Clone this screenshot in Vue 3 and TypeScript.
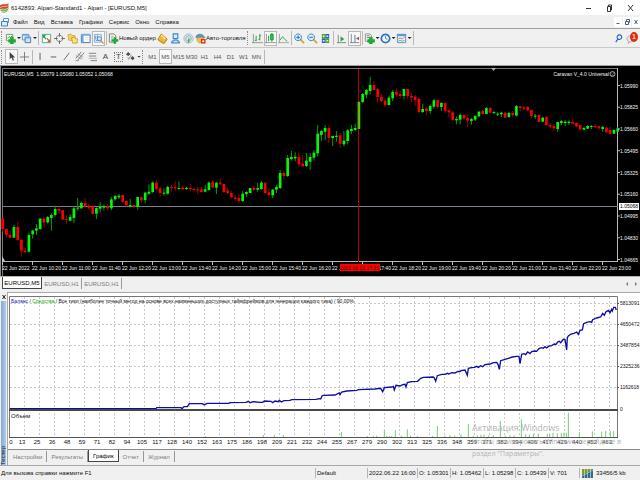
<script setup lang="ts">
import { ref } from 'vue'

type Shape = { d: string; f?: string; s?: string; w?: number }
type Tool = { icon: string; name: string; drop?: boolean; text?: string; on?: boolean }

const icons: Record<string, Shape[]> = {
  newChart: [
    { d: 'M1.500 1.500h7v7h-7z', f: '#eef5ee', s: '#6f9a7c' },
    { d: 'M2.500 6l2-2 1.500 1 2-2', s: '#3f9e53' },
    { d: 'M6 4.500h3v2.500h2.500v3H9v2H6v-2H4v-3h2z', f: '#18b22c', s: '#0c8a1c', w: 0.5 },
  ],
  profiles: [
    { d: 'M1.500 1.500h7v6h-7z', f: '#e9f2fb', s: '#5b8fc4' },
    { d: 'M4.500 4.500h6v6h-6z', f: '#cfe3f7', s: '#3f78b5' },
    { d: 'M4 5.500h7M1 2.500h8', s: '#6da2d8' },
  ],
  market: [
    { d: 'M1.500 1.500h9v9h-9z', f: '#f4fbf6', s: '#4fa6a0' },
    { d: 'M2 2h3v1L4 4l2 2-1 1-2-2-1 1z', f: '#1eaa3c' },
    { d: 'M10 10H6.500L8 8.500 6 6.500l1-1 2 2 1-1z', f: '#e2542c' },
  ],
  navigator: [
    { d: 'M6 2.500a3.500 3.500 0 1 0 .01 0z', s: '#777' },
    { d: 'M6 0v4M6 8v4M0 6h4M8 6h4', s: '#666' },
  ],
  folder: [
    { d: 'M1 2l3-1 1.500 1.500L9 3v5H2z', f: '#f5d262', s: '#c59a26', w: 0.7 },
    { d: 'M5 5l2.500-.5L9 6l2.500.5-.5 4.500H6z', f: '#ffe27a', s: '#b88a1a', w: 0.8 },
  ],
  terminal: [
    { d: 'M1.500 1.500h9.500v9h-9.500z', f: '#fff', s: '#2f74b8' },
    { d: 'M1 1h10v2H1zM2 3h2v7H2z', f: '#76aede' },
    { d: 'M5.500 5h4M5.500 7h4', s: '#c9d9e8', w: 0.7 },
  ],
  tester: [
    { d: 'M1.500 1.500h7.500v8.500H1.500z', f: '#f3f8fd', s: '#7fa6cc' },
    { d: 'M3 3v4M5 2.500v3M3 8h3', s: '#4a86c6' },
    { d: 'M7 4a2.200 2.200 0 1 0 .01 0z', f: '#cfe6fa', s: '#3c78b4' },
    { d: 'M8.500 8l3 3.500', s: '#c08a2c', w: 1.300 },
  ],
  order: [
    { d: 'M1.500 1h5l2 2v7h-7z', f: '#fbfbfb', s: '#7a7a7a' },
    { d: 'M3 3.500h3M3 5.500h3', s: '#9a9a9a' },
    { d: 'M6.500 5h2v2h2.500v2H8.500v2.500h-2V9H4V7h2.500z', f: '#1bb52e', s: '#0a8f1c', w: 0.5 },
  ],
  editor: [
    { d: 'M4.500 1L11 6.500 7.500 11 1 7z', f: '#f3b92c', s: '#b5790c', w: 0.8 },
    { d: 'M4.500 2.500L9 6.500', s: '#ffe9a0', w: 1.500 },
    { d: 'M1 7l1 1.500L7.500 12l3.500-5', s: '#c98d18' },
  ],
  vps: [
    { d: 'M3.500 1h5v5h-5z', f: '#d5eafb', s: '#3a84c8', w: 1.200 },
    { d: 'M1.500 11c0-5 9-5 9 0z', f: '#6fb0e6', s: '#2d72b6', w: 0.8 },
    { d: 'M4 9.500h4', s: '#e4f1fc' },
  ],
  signal: [
    { d: 'M6 1a5 5 0 1 0 .01 0z', f: '#dfe9ee', s: '#8fa9b8', w: 0.8 },
    { d: 'M6 3a3 3 0 1 0 .01 0z', s: '#5f9ab4', w: 0.8 },
    { d: 'M6 4.500l1.500 2L6.500 11H5z', f: '#53b35a' },
  ],
  auto: [
    { d: 'M1 4c1-3.500 7-3.500 8.500-.5L11 5H1z', f: '#5b94c8', s: '#2d689f', w: 0.6 },
    { d: 'M2 5h7c0 4-1.500 6-3.500 6S2 9 2 5z', f: '#f2c043', s: '#bb8a1e', w: 0.6 },
    { d: 'M6.500 6.500h5v5h-5z', f: '#e22b1a' },
    { d: 'M8 8h2v2H8z', f: '#fff' },
  ],
  bars: [
    { d: 'M1.500 1v10M0 10.500h12', s: '#8a958d' },
    { d: 'M4.500 3v6M3 8h1.500M8.500 1v7M8.500 3H10M7 7h1.500', s: '#2a9448' },
  ],
  candles: [
    { d: 'M1.500 1v10M0 10.500h12', s: '#8a958d' },
    { d: 'M4 3v6M7.500 0v9.500', s: '#16863a' },
    { d: 'M6 1.500h3v6H6z', f: '#24c348', s: '#0f8e2c', w: 0.8 },
  ],
  line: [
    { d: 'M1.500 1v10M0 10.500h12', s: '#9aa59d' },
    { d: 'M2 8l3-4 2 2.500L10 9', s: '#2c9c4a' },
  ],
  zoomIn: [
    { d: 'M7 7l4 4', s: '#d6a628', w: 2 },
    { d: 'M4.500 1a3.700 3.700 0 1 0 .01 0z', f: '#d7ecfb', s: '#3d80bd' },
    { d: 'M2.500 4.700h4M4.500 2.700v4', s: '#2469a8' },
  ],
  zoomOut: [
    { d: 'M7 7l4 4', s: '#d6a628', w: 2 },
    { d: 'M4.500 1a3.700 3.700 0 1 0 .01 0z', f: '#d7ecfb', s: '#3d80bd' },
    { d: 'M2.500 4.700h4', s: '#2469a8' },
  ],
  tile: [
    { d: 'M2 1h4v5H2zM6 6h4v5H6z', f: '#42a52c' },
    { d: 'M6 1h4v5H6zM2 6h4v5H2z', f: '#2c62ae' },
    { d: 'M3 3.500h2M7 3.500h2M3 8.500h2M7 8.500h2', s: '#e8f3e8', w: 1.500 },
  ],
  scroll: [
    { d: 'M2.500 2v9M1 10.500h10', s: '#7c857e' },
    { d: 'M5 3.500l4 3-4 3z', f: '#2da446' },
  ],
  shift: [
    { d: 'M2.500 1v10M1 10.500h10', s: '#7c857e' },
    { d: 'M11 4v4L7.500 6z', f: '#c8462c' },
    { d: 'M6.500 2v8', s: '#3f78b5' },
  ],
  indicator: [
    { d: 'M1.500 1h5l1.500 1.500V9H1.500z', f: '#f3f3f3', s: '#8b8b8b' },
    { d: 'M3 3h3M3 5h3', s: '#777' },
    { d: 'M6 4.500h3v2.500h2.500v3H9v2H6v-2H4v-3h2z', f: '#18b22c', s: '#0c8a1c', w: 0.5 },
  ],
  clock: [
    { d: 'M6 1.500a4.500 4.500 0 1 0 .01 0z', f: '#f2f8fe', s: '#2a74c4', w: 1.800 },
    { d: 'M6 3.500V6l2 1', s: '#3a5c80', w: 0.8 },
  ],
  template: [
    { d: 'M1.500 1.500h9v9h-9z', f: '#eaf3fb', s: '#5a8fc2' },
    { d: 'M1 1h10v2.500H1z', f: '#5e9ad2' },
    { d: 'M2.500 6.500l2-1 2 1 3-2', s: '#d05a40', w: 0.8 },
    { d: 'M2.500 9l2-1 2 1 3-1', s: '#3b9c58', w: 0.8 },
  ],
  cursor: [{ d: 'M4 1v8l2-1.800L7.500 10.500l1.200-.6L7.500 7H10z', f: '#444' }],
  cross: [{ d: 'M6 1v10M1 6.500h10', s: '#777' }],
  vline: [{ d: 'M5.500 2v8', s: '#555' }],
  hline: [{ d: 'M3 6.500h6', s: '#555' }],
  trend: [{ d: 'M3 10l6-8', s: '#666' }],
  channel: [
    { d: 'M2 8l6-7M4 10l7-8', s: '#555', w: 0.8 },
    { d: 'M2 5l7 4M4 3l6 4M1.500 10.500h4', s: '#777', w: 0.7 },
  ],
  fibo: [
    { d: 'M2 2.500h8M2 5.500h8M4 10.500h7', s: '#777' },
    { d: 'M2 8h9', s: '#aaa' },
  ],
  arrows: [
    { d: 'M3.500 1l2.500 2.500-2.500 2L1 3.500zM8 5.500l2.500 2L8.500 10 6 8z', f: '#4b4b4b' },
    { d: 'M3 7l1 2 3-5', s: '#777', w: 0.8 },
  ],
}

const fileTools: Tool[] = [
  { icon: 'newChart', name: 'Новый график', drop: true },
  { icon: 'profiles', name: 'Профили', drop: true },
]
const panelTools: Tool[] = [
  { icon: 'market', name: 'Обзор рынка' },
  { icon: 'navigator', name: 'Окно данных' },
  { icon: 'folder', name: 'Навигатор' },
  { icon: 'terminal', name: 'Терминал' },
  { icon: 'tester', name: 'Тестер стратегий', on: true },
]
const orderTools: Tool[] = [
  { icon: 'order', name: 'Новый ордер', text: 'Новый ордер' },
  { icon: 'editor', name: 'MetaEditor' },
  { icon: 'vps', name: 'Хостинг' },
  { icon: 'signal', name: 'Сигналы' },
  { icon: 'auto', name: 'Авто-торговля', text: 'Авто-торговля' },
]
const viewTools: Tool[] = [
  { icon: 'bars', name: 'Бары' },
  { icon: 'candles', name: 'Свечи', on: true },
  { icon: 'line', name: 'Линия' },
]
const zoomTools: Tool[] = [
  { icon: 'zoomIn', name: 'Увеличить' },
  { icon: 'zoomOut', name: 'Уменьшить' },
  { icon: 'tile', name: 'Мозаика' },
]
const scrollTools: Tool[] = [
  { icon: 'scroll', name: 'Автопрокрутка' },
  { icon: 'shift', name: 'Сдвиг графика', on: true },
]
const studyTools: Tool[] = [
  { icon: 'indicator', name: 'Индикаторы', drop: true },
  { icon: 'clock', name: 'Периоды', drop: true },
  { icon: 'template', name: 'Шаблоны', drop: true },
]
const mainGroups = [fileTools, panelTools, orderTools, viewTools, zoomTools, scrollTools, studyTools]
const gripBefore = [0, 3]

const drawGroups: Tool[][] = [
  [
    { icon: 'cursor', name: 'Курсор', on: true },
    { icon: 'cross', name: 'Перекрестие' },
  ],
  [
    { icon: 'vline', name: 'Вертикальная линия' },
    { icon: 'hline', name: 'Горизонтальная линия' },
    { icon: 'trend', name: 'Трендовая линия' },
    { icon: 'channel', name: 'Канал' },
    { icon: 'fibo', name: 'Фибоначчи' },
    { icon: '', name: 'Текст', text: 'A' },
    { icon: '', name: 'Метка', text: 'T' },
    { icon: 'arrows', name: 'Стрелки', drop: true },
  ],
]
const frames = ['M1', 'M5', 'M15', 'M30', 'H1', 'H4', 'D1', 'W1', 'MN']
const frame = ref('M5')

const menus = ['Файл', 'Вид', 'Вставка', 'Графики', 'Сервис', 'Окно', 'Справка']
const chartTabs = ['EURUSD,M5', 'EURUSD,H1', 'EURUSD,H1']
const chartTab = ref(0)
const testerTabs = ['Настройки', 'Результаты', 'График', 'Отчет', 'Журнал']
const testerTab = ref(2)
const status = ['Default', '2022.06.22 16:00', 'O: 1.05301', 'H: 1.05462', 'L: 1.05298', 'C: 1.05439', 'V: 701']

// Candles: direction, body top, body bottom, high, low (in thirds of a chart unit)
const candleData = `
R460,492,460,500 R492,510,489,518 R510,518,497,518 G486,518,480,518 R486,525,471,528 R525,557,522,575
R557,561,549,566 G510,560,503,562 G497,508,495,521 G490,497,477,510 G461,492,459,494 R461,473,455,488
G456,472,453,476 G450,459,445,497 G432,450,422,455 R432,437,424,445 R435,464,435,465 R462,465,450,478
G456,467,447,468 G430,459,425,474 G428,431,399,437 G414,430,410,431 R414,424,399,430 R422,428,416,435
R424,447,420,447 G429,446,427,462 G425,431,411,443 G424,428,419,436 R424,430,417,437 G403,430,396,435
G393,403,390,407 G392,397,387,402 R390,410,390,413 R408,421,405,425 G420,424,402,428 R420,425,418,430
G396,426,395,434 R397,406,395,413 G383,405,380,415 G380,386,358,390 G353,381,349,385 R353,372,345,376
R370,384,366,395 G383,386,370,392 G366,386,362,389 R366,369,360,381 R366,370,348,378 G369,372,350,374
R368,373,362,375 G369,372,365,375 R369,373,357,377 R372,375,368,380 R373,376,366,388 R373,381,366,384
G373,380,360,382 G353,375,349,377 R351,367,345,370 G353,368,351,387 R353,358,340,360 R357,381,357,384
R377,384,368,388 R384,396,378,400 R398,402,390,407 R399,408,386,415 G386,408,378,411 G381,387,379,396
G369,384,369,385 R369,375,363,378 G369,374,353,380 G353,372,348,374 R353,384,353,386 R382,390,369,394
G374,391,372,399 G366,374,360,384 G324,369,315,372 R324,333,318,344 G279,333,270,336 G276,282,258,287
G275,280,262,289 R276,298,263,306 R296,304,270,304 G287,303,264,306 G276,290,264,315 G263,278,255,287
G206,265,180,275 G198,210,195,228 G189,200,180,225 R189,219,180,234 G213,219,213,243 G212,216,198,230
R211,236,204,249 G227,238,198,244 G196,228,192,238 G192,198,180,207 G189,195,176,197 G110,192,110,192
G87,111,84,114 G75,89,72,100 G60,78,36,88 R60,75,48,76 R72,96,69,113 R96,108,86,111
R107,120,100,126 G98,120,92,122 G81,100,75,108 R80,89,70,96 R87,93,76,101 G72,93,72,103
R72,93,72,102 R93,98,84,112 R95,105,90,122 R102,141,96,143 G132,141,116,144 R130,138,126,150
G123,138,118,146 G106,125,102,131 R105,126,105,131 G114,126,111,138 R114,138,112,144 R136,142,133,158
R142,165,138,167 G162,166,155,178 G150,164,146,178 R150,160,148,164 R159,167,148,186 G162,168,158,179
G153,164,150,168 G140,154,138,157 R138,147,135,149 G129,147,126,148 R129,143,126,144 G141,143,137,148
G146,149,142,153 G143,148,140,156 R143,158,141,159 G144,156,140,158 R144,150,138,157 G123,152,120,154
R124,129,123,140 R127,131,123,137 R126,136,123,138 R135,153,133,160 G152,155,147,162 R150,171,147,171
G158,170,155,172 R156,180,154,184 R180,184,172,190 R183,190,177,198 G171,192,170,200 G168,174,165,180
G170,174,165,183 G170,174,166,180 R171,176,160,178 R174,184,172,187 R180,193,178,195 G189,194,185,194
G183,191,180,192 G183,186,180,192 R183,187,177,188 R184,190,182,194 G186,192,182,200 R188,202,186,202
R195,206,186,207 G195,206,192,207 G190,200,188,200`
const candles = candleData.trim().split(/\s+/).map((item, i) => {
  const [top, bottom, high, low] = item.slice(1).split(',').map(Number)
  return { x: 8 + 11.25 * i, up: item[0] === 'G', top, bottom, high, low }
})

const prices = ['1.05990', '1.05825', '1.05660', '1.05495', '1.05325', '1.05160', '1.04995', '1.04830', '1.04665']
const times = ['22 Jun 2022', '22 Jun 10:20', '22 Jun 11:00', '22 Jun 11:40', '22 Jun 12:20', '22 Jun 13:00',
  '22 Jun 13:40', '22 Jun 14:20', '22 Jun 15:00', '22 Jun 15:40', '22 Jun 16:20', '22 Jun 17:00', '22 Jun 17:40',
  '22 Jun 18:20', '22 Jun 19:00', '22 Jun 19:40', '22 Jun 20:20', '22 Jun 21:00', '22 Jun 21:40', '22 Jun 22:20',
  '22 Jun 23:00']

const balance = `30,368 468,368 470,365 543,365 546,368 552,362 562,362 568,353 606,353 613,356 622,352 630,352
687,352 690,350 738,349 745,346 750,350 760,347 780,349 788,349 793,345 813,346 818,350 825,345 835,347 838,343
844,348 852,344 870,343 875,341 948,340 957,338 962,339 966,330 970,328 1005,327 1018,321 1020,326 1025,318
1040,315 1070,313 1075,311 1125,309 1142,307 1148,317 1153,305 1175,303 1180,301 1183,312 1188,298 1200,300
1208,296 1215,295 1218,303 1222,290 1235,287 1253,286 1262,277 1270,274 1300,273 1303,276 1307,286 1312,269
1325,265 1335,265 1343,262 1347,264 1355,260 1365,261 1373,256 1380,257 1383,254 1395,252 1402,268 1405,247
1415,245 1423,244 1430,241 1435,244 1442,239 1448,242 1455,236 1470,234 1480,230 1490,229 1494,235 1498,250
1502,224 1515,220 1525,217 1537,213 1550,211 1557,211 1560,233 1565,205 1572,203 1577,206 1583,198 1590,203
1595,197 1605,195 1610,196 1617,188 1625,185 1630,187 1635,182 1640,186 1647,180 1655,179 1663,174 1668,175
1673,168 1678,166 1682,170 1690,160 1695,161 1700,192 1702,155 1705,150 1713,144 1722,142 1730,138 1735,145
1740,133 1747,132 1751,113 1760,109 1770,107 1775,109 1778,101 1790,96 1802,93 1808,82 1813,88 1818,77 1825,73
1830,80 1835,70 1837,75 1841,64 1846,64 1849,72`
const volumes = [[616, 450], [790, 447], [823, 447], [850, 447], [1024, 438], [1102, 450], [1120, 450], [1130, 449],
  [1153, 434], [1160, 449], [1169, 450], [1175, 450], [1186, 432], [1204, 449], [1222, 430], [1232, 449], [1252, 450],
  [1298, 450], [1312, 420], [1335, 449], [1350, 448], [1364, 449], [1383, 446], [1405, 414], [1420, 449], [1432, 448],
  [1443, 446], [1452, 446], [1466, 449], [1480, 447], [1501, 405], [1516, 449], [1530, 448], [1542, 448], [1564, 400],
  [1577, 445], [1588, 446], [1600, 444], [1615, 443], [1642, 444], [1649, 444], [1659, 440], [1672, 442], [1684, 441],
  [1692, 440], [1699, 440], [1705, 380], [1738, 438], [1777, 436], [1805, 437], [1817, 435], [1831, 435], [1841, 435]]
const trades = [0, 13, 25, 36, 48, 59, 71, 82, 94, 105, 117, 128, 140, 152, 163, 175, 186, 198, 209, 221, 232, 244,
  255, 267, 279, 290, 302, 313, 325, 336, 348, 359, 371, 382, 394, 406, 417, 429, 440, 452, 463]
const sums = ['5813091', '4650472', '3487854', '2325236', '1162618']
</script>

<template>
  <div class="app">
    <header class="title">
      <svg class="logo" viewBox="0 0 9 10" aria-hidden="true">
        <path d="M0 2.500C3-.5 5 3 8.500 0V2C5 5 3 2 0 4.500zM0 5C3 2.500 5 5.500 8.500 2.500V4.500C5 7.500 3 4.500 0 6.500z" fill="#dd4630" />
        <path d="M.5 7.200C3 5 5 8 8.500 5V6.500C5 9.500 3 6.500 1 8.500zM1.500 9C3.500 7.500 5 9.500 8 7.200 7 9.500 4 10.500 1.500 9z" fill="#55b034" />
      </svg>
      <h1>6142893: Alpari-Standard1 - Alpari - [EURUSD,M5]</h1>
      <div class="win">
        <button aria-label="Свернуть"><svg viewBox="0 0 8 8"><path d="M2 4.500h5" /></svg></button>
        <button aria-label="Развернуть"><svg viewBox="0 0 8 8"><path d="M2.500 2.500h3v5h-3zM3.500 2.500v-1.500h3v5h-1" /></svg></button>
        <button aria-label="Закрыть"><svg viewBox="0 0 8 8"><path d="M2 1l5 6M7 1l-5 6" /></svg></button>
      </div>
    </header>

    <nav class="menu">
      <svg class="child" viewBox="0 0 9 10" aria-hidden="true">
        <path d="M2.500 1.500h5v4h-5z" fill="#f4f9ff" stroke="#5a94cc" />
        <path d="M.5 4.500h6v4.500h-6z" fill="#dcebfa" stroke="#3f7ebd" />
      </svg>
      <button v-for="m in menus" :key="m">{{ m }}</button>
      <div class="mdi">
        <button aria-label="Свернуть окно"><svg viewBox="0 0 8 8"><path d="M2.500 5.500h3" /></svg></button>
        <button aria-label="Восстановить окно"><svg viewBox="0 0 8 8"><path d="M2.500 3.500h3v3h-3zM3.500 3v-1.500h3v3h-1" /></svg></button>
        <button aria-label="Закрыть окно"><svg viewBox="0 0 8 8"><path d="M2.500 2l3 4M5.500 2l-3 4" /></svg></button>
      </div>
    </nav>

    <div class="tools">
      <div class="bar top">
        <template v-for="(group, g) in mainGroups" :key="g">
          <i :class="gripBefore.includes(g) ? 'grip' : 'sep'"></i>
          <button v-for="t in group" :key="t.name" class="tool" :class="{ on: t.on, drop: t.drop, wide: t.text }" :aria-label="t.name">
            <svg viewBox="0 0 12 12">
              <path v-for="(p, k) in icons[t.icon]" :key="k" :d="p.d" :fill="p.f ?? 'none'" :stroke="p.s ?? 'none'" :stroke-width="p.w ?? 1" />
            </svg>
            <span v-if="t.text">{{ t.text }}</span>
            <b v-if="t.drop"></b>
          </button>
        </template>
        <i class="sep"></i>
        <button class="tool find" aria-label="Поиск">
          <svg viewBox="0 0 12 12"><path d="M7 2a2.500 2.500 0 1 0 .01 0zM5.500 6.500L3 10" fill="none" stroke="#2c62c8" stroke-width="1.300" /></svg>
        </button>
        <button class="tool bell" aria-label="Уведомления">
          <svg viewBox="0 0 12 12"><path d="M1 6c0-4 8-4 8 0s-4 4-5 3.500L2.500 11.500V9C1.500 8 1 7 1 6z" fill="#e4e6ea" stroke="#a5a9b0" /></svg>
          <em>1</em>
        </button>
      </div>
      <div class="bar draw">
        <template v-for="(group, g) in drawGroups" :key="g">
          <i :class="g === 0 ? 'grip' : 'sep'"></i>
          <button v-for="t in group" :key="t.name" class="tool" :class="{ on: t.on, drop: t.drop }" :aria-label="t.name">
            <svg v-if="t.icon" viewBox="0 0 12 12">
              <path v-for="(p, k) in icons[t.icon]" :key="k" :d="p.d" :fill="p.f ?? 'none'" :stroke="p.s ?? 'none'" :stroke-width="p.w ?? 1" />
            </svg>
            <span v-else class="glyph" :class="{ boxed: t.text === 'T' }">{{ t.text }}</span>
            <b v-if="t.drop"></b>
          </button>
        </template>
        <i class="grip"></i>
        <button v-for="f in frames" :key="f" class="tool frame" :class="{ on: frame === f }" @click="frame = f">{{ f }}</button>
        <i class="sep"></i>
      </div>
    </div>

    <main>
      <svg class="chart" viewBox="0 0 640 212" role="img" aria-label="EURUSD,M5">
        <rect width="640" height="212" fill="#000" />
        <path d="M0 .5H640" stroke="#a0a0a0" />
        <path d="M.5 0V212" stroke="#8c8c8c" />
        <path d="M2.500 211V3.500H618" fill="none" stroke="#777" />
        <path d="M617.500 3V197M2 196.500H618" stroke="#b8b8b8" />
        <path d="M2 191l3 5H2z" fill="#b9c8d8" />
        <path d="M491 3h5l-2.500 3z" fill="#9fb0c0" />
        <path d="M2 141.500H618" stroke="#78828f" />
        <g transform="scale(0.333333)">
          <g v-for="(c, i) in candles" :key="i" :class="c.up ? 'up' : 'down'">
            <rect class="wick" :x="c.x - 1.5" :y="c.high" width="3" :height="c.low - c.high" />
            <rect :x="c.x - 4" :y="c.top" width="8" :height="Math.max(3, c.bottom - c.top)" />
          </g>
        </g>
        <path d="M358.500 4V197" stroke="#c00000" />
        <path d="M358.500 37V64" stroke="#c07a20" />
        <g v-for="(p, i) in prices" :key="p">
          <path :d="`M618 ${20.500 + i * 21.750}h2`" stroke="#b8b8b8" />
          <text x="620" :y="22.5 + i * 21.75">{{ p }}</text>
        </g>
        <rect x="619" y="138" width="20" height="7" fill="#fff" />
        <text x="620" y="143" class="dark">1.05068</text>
        <g v-for="(t, i) in times" :key="t">
          <path :d="`M${2.500 + i * 30} 197v3`" stroke="#b8b8b8" />
          <text :x="2 + i * 30" y="205">{{ t }}</text>
        </g>
        <rect x="340" y="199" width="40" height="7" fill="#f00" />
        <text x="340" y="205" class="maroon">2022.06.22 17:35</text>
        <text x="4" y="11">EURUSD,M5&#160; 1.05079 1.05080 1.05052 1.05068</text>
        <text x="609" y="11" text-anchor="end">Caravan V_4.0 Universal</text>
        <circle cx="612.500" cy="9" r="2.500" fill="none" stroke="#ddd" stroke-width=".7" />
        <path d="M611.500 8h.8M613 8h.8M611.300 10.500q1.200-1 2.400 0" fill="none" stroke="#ddd" stroke-width=".7" />
        <path d="M0 211.500H640" stroke="#b4b4b4" />
      </svg>

      <div class="tabs">
        <button v-for="(t, i) in chartTabs" :key="i" :class="{ active: chartTab === i }" @click="chartTab = i">{{ t }}</button>
        <div class="turn">
          <button aria-label="Назад"><svg viewBox="0 0 6 8"><path d="M4 2v4L2 4z" /></svg></button>
          <button aria-label="Вперёд"><svg viewBox="0 0 6 8"><path d="M2 2v4l2-2z" /></svg></button>
        </div>
      </div>

      <section class="tester">
        <div class="side">
          <button aria-label="Закрыть тестер"><svg viewBox="0 0 6 6"><path d="M1.500 1l3 4M4.500 1l-3 4" /></svg></button>
          <div class="strip"><span>Тестер</span></div>
        </div>
        <div class="pane">
          <svg class="report" viewBox="8 291 632 158" role="img" aria-label="График баланса">
            <rect x="8" y="291" width="632" height="158" fill="#fff" />
            <path d="M8 291.500H640" stroke="#a8a8a8" />
            <g stroke="#c8c8c8" stroke-dasharray="2 2">
              <path v-for="k in 40" :key="k" :d="`M${9.500 + k * 15} 296V436`" />
              <path v-for="k in 5" :key="'h' + k" :d="`M10 ${281.500 + k * 21}H617`" />
            </g>
            <path d="M9.500 437V295.500H617.500V437" fill="none" stroke="#777" />
            <path d="M9 436.500H618" stroke="#555" />
            <g transform="translate(0 285) scale(0.333333)">
              <rect v-for="v in volumes" :key="v[0]" :x="v[0] - 1.5" :y="v[1]" width="3" :height="453 - v[1]" fill="#6fd272" />
              <polyline :points="balance" fill="none" stroke="#0c0ca6" stroke-width="4" />
            </g>
            <path d="M9 409H618" stroke="#484848" stroke-width="2" />
            <text x="11" y="302"><tspan fill="#1212c8">Баланс</tspan> / <tspan fill="#00b400">Средства</tspan> / Все тики (наиболее точный метод на основе всех наименьших доступных таймфреймов для генерации каждого тика) / 90.00%</text>
            <text x="11" y="417" class="num">Объем</text>
            <g v-for="(s, i) in sums" :key="s">
              <path :d="`M617 ${302.500 + i * 21}h2`" stroke="#555" />
              <text x="620" :y="304 + i * 21">{{ s }}</text>
            </g>
            <text x="620" y="410">0</text>
            <text v-for="(n, i) in trades" :key="n" :x="i ? 7 + i * 15 : 11" y="443" text-anchor="middle" class="num">{{ n }}</text>
            <path d="M8 448.500H640" stroke="#8a8a8a" />
          </svg>
          <div class="tabs low">
            <button v-for="(t, i) in testerTabs" :key="t" :class="{ active: testerTab === i }" @click="testerTab = i">{{ t }}</button>
          </div>
        </div>
        <div class="mark">
          <strong>Активация Windows</strong>
          <span>Чтобы активировать Windows, перейдите в</span>
          <span>раздел "Параметры".</span>
        </div>
      </section>
    </main>

    <footer class="status">
      <span>Для вызова справки нажмите F1</span>
      <span v-for="s in status" :key="s">{{ s }}</span>
      <span class="net">
        <svg viewBox="0 0 11 9" aria-hidden="true">
          <path d="M0 0h11v9H0z" fill="#2f6c86" />
          <path d="M0 0h11L0 6z" fill="#7d9a2c" />
          <path d="M2.500 0v9M5.500 0v9M8.500 0v9M0 7l11-6" stroke="#e3ead2" stroke-width=".6" />
        </svg>
        33456/5 kb
      </span>
    </footer>
  </div>
</template>

<style>
body {
  margin: 0;
}
</style>

<style scoped>
.app {
  display: flex;
  flex-direction: column;
  min-height: 100vh;
  background: #f0f0f0;
  color: #111;
  font: 6px/10px 'Liberation Sans', Arial, sans-serif;
  white-space: nowrap;
}
button {
  display: flex;
  align-items: center;
  justify-content: center;
  padding: 0;
  border: 0;
  background: none;
  color: inherit;
  font: inherit;
}
.title {
  display: flex;
  align-items: center;
  height: 15px;
  background: #fff;
}
.logo {
  width: 9px;
  height: 10px;
  margin-right: 2px;
}
h1 {
  margin: 0;
  flex: 1;
  font: inherit;
}
.win {
  display: flex;
}
.win button {
  width: 21px;
  height: 15px;
}
.win svg,
.mdi svg {
  width: 8px;
  height: 8px;
  fill: none;
  stroke: #333;
}
.menu {
  display: flex;
  align-items: center;
  gap: 6px;
  height: 13px;
  border-bottom: 1px solid #a0a0a0;
}
.child {
  width: 9px;
  height: 10px;
  margin: 0 -3px 0 1px;
}
.mdi {
  display: flex;
  gap: 1px;
  margin-left: auto;
}
.mdi button {
  width: 8px;
  height: 10px;
  background: #fff;
}
.mdi svg {
  stroke: #4d6078;
}
.bar {
  display: flex;
  align-items: center;
  height: 17px;
}
.top {
  height: 18px;
  border-bottom: 1px solid #c8c8c8;
}
.grip {
  width: 2px;
  height: 14px;
  margin: 0 2px 0 1px;
  box-sizing: border-box;
  border-left: 1px dotted #8c8c8c;
}
.sep {
  width: 1px;
  height: 14px;
  margin: 0 1px;
  background: #b8b8b8;
}
.tool {
  box-sizing: border-box;
  width: 13px;
  height: 15px;
}
.tool svg {
  flex: none;
  width: 11px;
  height: 11px;
}
.tool.drop {
  width: 16px;
}
.tool.wide {
  width: auto;
}
.tool b {
  flex: none;
  width: 4px;
  height: 2px;
  margin-left: 1px;
  background: #222;
  clip-path: polygon(0 0, 100% 0, 50% 100%);
}
.tool.on {
  border: 1px solid #b8b8b8;
  background: #f9f9f9;
}
.find {
  margin-left: auto;
}
.bell {
  position: relative;
  margin-right: 2px;
}
.bell em {
  position: absolute;
  top: 1px;
  right: 0;
  width: 8px;
  height: 10px;
  border-radius: 50%;
  background: #dc2c14;
  color: #fff;
  font-size: 8px;
  font-style: normal;
  text-align: center;
}
.glyph {
  color: #444;
  font-size: 8px;
}
.boxed {
  width: 7px;
  border: 1px dotted #777;
  line-height: 8px;
}
.frame {
  color: #555;
}
.chart,
.report {
  display: block;
  width: 100%;
  height: auto;
}
.chart text {
  fill: #f4f4f4;
  font-size: 5px;
}
.chart .dark {
  fill: #000;
}
.chart .maroon {
  fill: #600000;
}
.up rect {
  fill: #00fa00;
}
.up .wick {
  fill: #00a000;
}
.down rect {
  fill: #fa0000;
}
.down .wick {
  fill: #a00000;
}
.report text {
  fill: #111;
  font-size: 5px;
}
.report .num {
  font-size: 6px;
}
.tabs {
  display: flex;
  height: 15px;
  padding-left: 2px;
  color: #7c7c7c;
}
.tabs button {
  box-sizing: border-box;
  width: 40px;
  height: 11px;
  margin-top: 1px;
  border-right: 1px solid #999;
}
.tabs button.active {
  height: 12px;
  margin-top: 0;
  border: 1px solid #444;
  border-top: 0;
  background: #fff;
  color: #000;
}
.turn {
  display: flex;
  margin-left: auto;
}
.tabs .turn button {
  width: 9px;
  border: 0;
}
.turn svg {
  width: 6px;
  height: 8px;
  fill: #777;
}
.tester {
  display: flex;
  position: relative;
  border-bottom: 1px solid #a8a8a8;
}
.side {
  display: flex;
  flex-direction: column;
  width: 7px;
  border-right: 1px solid #a8a8a8;
}
.side button {
  height: 9px;
}
.side svg {
  width: 6px;
  height: 6px;
  stroke: #222;
}
.strip {
  display: flex;
  flex: 1;
  align-items: flex-end;
  margin: 0 1px;
  background: linear-gradient(90deg, #86a9d0, #b4cce8);
}
.strip span {
  writing-mode: vertical-rl;
  transform: rotate(180deg);
  line-height: 5px;
  color: #112;
}
.pane {
  flex: 1;
}
.low {
  padding-left: 1px;
}
.low button {
  width: auto;
  padding: 0 4px;
}
.mark {
  display: flex;
  flex-direction: column;
  position: absolute;
  right: 24px;
  bottom: 5px;
  width: 144px;
  color: #b4b4b4;
  font: 7px/12px 'Open Sans', sans-serif;
  pointer-events: none;
}
.mark strong {
  font-size: 9px;
  font-weight: 400;
  line-height: 16px;
}
.status {
  display: grid;
  flex: 1;
  grid-template-columns: 1fr 52px 50px 33px 33px 32px 33px 31px 61px;
  align-items: center;
}
.status span {
  padding-left: 1px;
  border-left: 1px solid #b4b4b4;
}
.status span:first-child {
  border: 0;
}
.status .net {
  display: flex;
  align-items: center;
  gap: 3px;
  padding-left: 2px;
}
.net svg {
  width: 11px;
  height: 9px;
}
</style>
